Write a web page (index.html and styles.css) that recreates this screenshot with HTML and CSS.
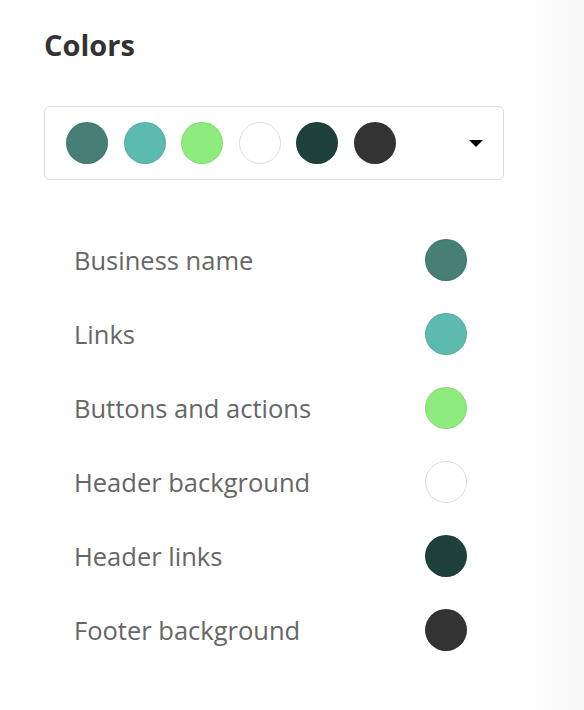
FILE: index.html
```html
<!DOCTYPE html>
<html>
<head>
<meta charset="utf-8">
<link rel="stylesheet" href="styles.css">
</head>
<body>
<div class="page">
  <h2 class="title">Colors</h2>
  <div class="palette">
    <div class="swatches">
      <span class="dot c1"></span>
      <span class="dot c2"></span>
      <span class="dot c3"></span>
      <span class="dot c4"></span>
      <span class="dot c5"></span>
      <span class="dot c6"></span>
    </div>
    <span class="caret"></span>
  </div>
  <ul class="list">
    <li class="row"><span class="label">Business name</span><span class="dot c1"></span></li>
    <li class="row"><span class="label">Links</span><span class="dot c2"></span></li>
    <li class="row"><span class="label">Buttons and actions</span><span class="dot c3"></span></li>
    <li class="row"><span class="label">Header background</span><span class="dot c4"></span></li>
    <li class="row"><span class="label">Header links</span><span class="dot c5"></span></li>
    <li class="row"><span class="label">Footer background</span><span class="dot c6"></span></li>
  </ul>
</div>
<div class="edge"></div>
</body>
</html>
```
FILE: styles.css
```css
html, body {
  margin: 0;
  padding: 0;
  background: #fff;
}
body {
  font-family: "Open Sans", "Lato", sans-serif;
  width: 584px;
  height: 710px;
  overflow: hidden;
  position: relative;
}
.page {
  padding: 26px 0 0 44px;
  width: 460px;
}
.title {
  margin: 0;
  font-size: 29px;
  font-weight: 700;
  color: #333;
  line-height: 38px;
}
.palette {
  margin-top: 42px;
  border: 1px solid #dcdcdc;
  border-radius: 6px;
  box-sizing: border-box;
  height: 74px;
  display: flex;
  align-items: center;
  justify-content: space-between;
  padding: 0 20px 0 21px;
}
.swatches {
  display: flex;
  gap: 15.6px;
}
.dot {
  width: 42px;
  height: 42px;
  border-radius: 50%;
  box-sizing: border-box;
  border: 1px solid rgba(0,0,0,0.08);
  display: block;
  flex: none;
}
.c1 { background: #457f76; }
.c2 { background: #5cbaae; }
.c3 { background: #8eeb7e; }
.c4 { background: #fff; border-color: #dcdcdc; }
.c5 { background: #1f413b; }
.c6 { background: #333; }
.caret {
  width: 0;
  height: 0;
  border-left: 7px solid transparent;
  border-right: 7px solid transparent;
  border-top: 7px solid #000;
}
.list {
  list-style: none;
  margin: 43px 0 0 0;
  padding: 0 37px 0 30px;
}
.row {
  display: flex;
  align-items: center;
  justify-content: space-between;
  height: 74px;
}
.label {
  font-size: 25.5px;
  color: #666;
}
.edge {
  position: absolute;
  top: 0;
  right: 0;
  width: 60px;
  height: 710px;
  background: linear-gradient(to right, rgba(245,245,245,0), #f8f8f8);
}
```
